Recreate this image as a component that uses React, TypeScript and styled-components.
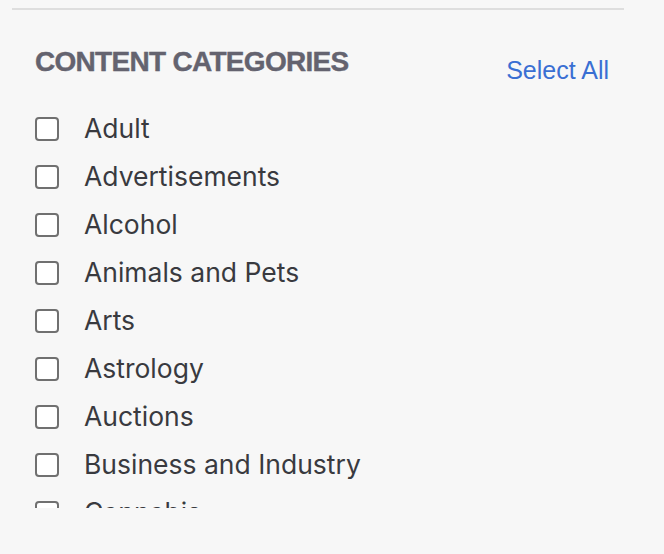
import React, { useState } from 'react';
import styled, { createGlobalStyle } from 'styled-components';

const GlobalStyle = createGlobalStyle`
  html, body {
    margin: 0;
    padding: 0;
    background: #f7f7f7;
  }
  body {
    font-family: Inter, "Liberation Sans", Arial, sans-serif;
  }
`;

const Panel = styled.div`
  width: 664px;
  height: 554px;
  background: #f7f7f7;
  box-sizing: border-box;
  padding-top: 8px;
`;

const Divider = styled.div`
  height: 2px;
  margin: 0 40px 0 12px;
  background: #dedede;
`;

const Header = styled.div`
  display: flex;
  justify-content: space-between;
  align-items: flex-end;
  padding: 36px 55px 0 35px;
`;

const Heading = styled.h2`
  margin: 0;
  font-family: "Liberation Sans", Arial, sans-serif;
  font-weight: 700;
  font-size: 28px;
  line-height: 32px;
  color: #64636f;
  letter-spacing: -0.7px;
  -webkit-text-stroke: 0.4px #64636f;
`;

const SelectAll = styled.button`
  border: 0;
  padding: 0;
  background: none;
  cursor: pointer;
  font-family: "Liberation Sans", Arial, sans-serif;
  font-size: 25px;
  line-height: 28px;
  color: #3a6fd3;
  margin-bottom: -6px;
`;

const List = styled.ul`
  list-style: none;
  margin: 27px 0 0;
  padding: 0 0 0 35px;
  height: 403px;
  overflow: hidden;
`;

const Row = styled.li`
  display: flex;
  align-items: center;
  gap: 25px;
  height: 48px;
  cursor: pointer;
`;

const Box = styled.span<{ checked: boolean }>`
  flex: none;
  width: 20px;
  height: 20px;
  border: 2px solid #707070;
  border-radius: 4px;
  background: ${({ checked }) => (checked ? '#3a6fd3' : '#ffffff')};
  border-color: ${({ checked }) => (checked ? '#3a6fd3' : '#707070')};
  display: flex;
  align-items: center;
  justify-content: center;
`;

const Label = styled.span`
  font-family: Inter, "Liberation Sans", Arial, sans-serif;
  font-size: 26.5px;
  color: #393a3f;
  line-height: 32px;
  margin-top: -3px;
`;

const categories = [
  'Adult',
  'Advertisements',
  'Alcohol',
  'Animals and Pets',
  'Arts',
  'Astrology',
  'Auctions',
  'Business and Industry',
  'Cannabis',
  'Chat and Instant Messaging',
];

const App: React.FC = () => {
  const [selected, setSelected] = useState<string[]>([]);

  const toggle = (name: string) => {
    setSelected(prev =>
      prev.includes(name) ? prev.filter(n => n !== name) : [...prev, name]
    );
  };

  return (
    <>
      <GlobalStyle />
      <Panel>
        <Divider />
        <Header>
          <Heading>CONTENT CATEGORIES</Heading>
          <SelectAll onClick={() => setSelected(categories)}>Select All</SelectAll>
        </Header>
        <List>
          {categories.map(name => {
            const checked = selected.includes(name);
            return (
              <Row key={name} onClick={() => toggle(name)}>
                <Box checked={checked}>
                  {checked && (
                    <svg width="14" height="14" viewBox="0 0 14 14">
                      <path
                        d="M2.5 7.5l3 3 6-7"
                        fill="none"
                        stroke="#fff"
                        strokeWidth="2"
                      />
                    </svg>
                  )}
                </Box>
                <Label>{name}</Label>
              </Row>
            );
          })}
        </List>
      </Panel>
    </>
  );
};

export default App;
